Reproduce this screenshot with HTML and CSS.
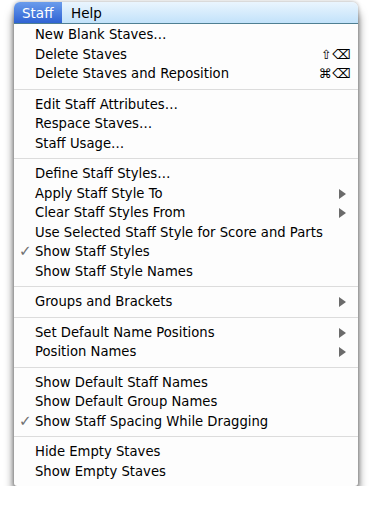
FILE: index.html
```html
<!DOCTYPE html>
<html lang="en">
<head>
    <meta charset="UTF-8">
    <title>Staff menu</title>
    <link rel="stylesheet" href="styles.css">
</head>
<body>
    <div class="menu">
        <!-- Menu bar -->
        <div class="menubar">
            <span class="title active">Staff</span>
            <span class="title">Help</span>
        </div>

        <!-- Items -->
        <div class="items">
            <div class="item">New Blank Staves…</div>
            <div class="item">Delete Staves<span class="key">⇧⌫</span></div>
            <div class="item">Delete Staves and Reposition<span class="key">⌘⌫</span></div>
            <div class="sep"></div>
            <div class="item">Edit Staff Attributes…</div>
            <div class="item">Respace Staves…</div>
            <div class="item">Staff Usage…</div>
            <div class="sep"></div>
            <div class="item">Define Staff Styles…</div>
            <div class="item sub">Apply Staff Style To</div>
            <div class="item sub">Clear Staff Styles From</div>
            <div class="item">Use Selected Staff Style for Score and Parts</div>
            <div class="item checked">Show Staff Styles</div>
            <div class="item">Show Staff Style Names</div>
            <div class="sep"></div>
            <div class="item sub">Groups and Brackets</div>
            <div class="sep"></div>
            <div class="item sub">Set Default Name Positions</div>
            <div class="item sub">Position Names</div>
            <div class="sep"></div>
            <div class="item">Show Default Staff Names</div>
            <div class="item">Show Default Group Names</div>
            <div class="item checked">Show Staff Spacing While Dragging</div>
            <div class="sep"></div>
            <div class="item">Hide Empty Staves</div>
            <div class="item">Show Empty Staves</div>
        </div>
    </div>
</body>
</html>
```

FILE: styles.css
```css
body {
    margin: 0;
    padding: 0;
    background-color: #ffffff;
    font-family: "DejaVu Sans", sans-serif;
    font-size: 13.2px;
    color: #000000;
}
.menu {
    width: 344px;
    margin: 2px 0 0 14px;
    background-color: #fdfdfd;
    border-radius: 6px 6px 3px 3px;
    box-shadow: 0 10px 10px rgba(0, 0, 0, 0.6), 0 0 4px rgba(0, 0, 0, 0.35);
    overflow: hidden;
}
/* Menu bar */
.menubar {
    display: flex;
    height: 21px;
    background: linear-gradient(#eaf5fe, #c2e2fa);
    border-bottom: 1px solid #4f7f92;
}
.title {
    display: flex;
    align-items: center;
    padding: 0 9px 0 9px;
    font-size: 13.5px;
}
.title.active {
    padding: 0 9px 0 8px;
    width: 31px;
    color: white;
    background: linear-gradient(#6a9cec, #2f62d3);
}
/* Items */
.items {
    padding: 1px 0 5px 0;
}
.item {
    position: relative;
    height: 19.5px;
    line-height: 19.5px;
    padding-left: 21px;
    white-space: nowrap;
}
.key {
    position: absolute;
    right: 6px;
    top: 0;
    font-size: 13px;
    letter-spacing: 1px;
}
.sub::after {
    content: "";
    position: absolute;
    right: 12px;
    top: 5px;
    border-left: 7px solid #6b6b6b;
    border-top: 5px solid transparent;
    border-bottom: 5px solid transparent;
}
.checked::before {
    content: "✓";
    position: absolute;
    left: 5px;
    color: #707070;
    font-size: 15px;
    font-weight: bold;
}
.sep {
    height: 1px;
    margin: 5px 0;
    background-color: #dcdcdc;
}
```
